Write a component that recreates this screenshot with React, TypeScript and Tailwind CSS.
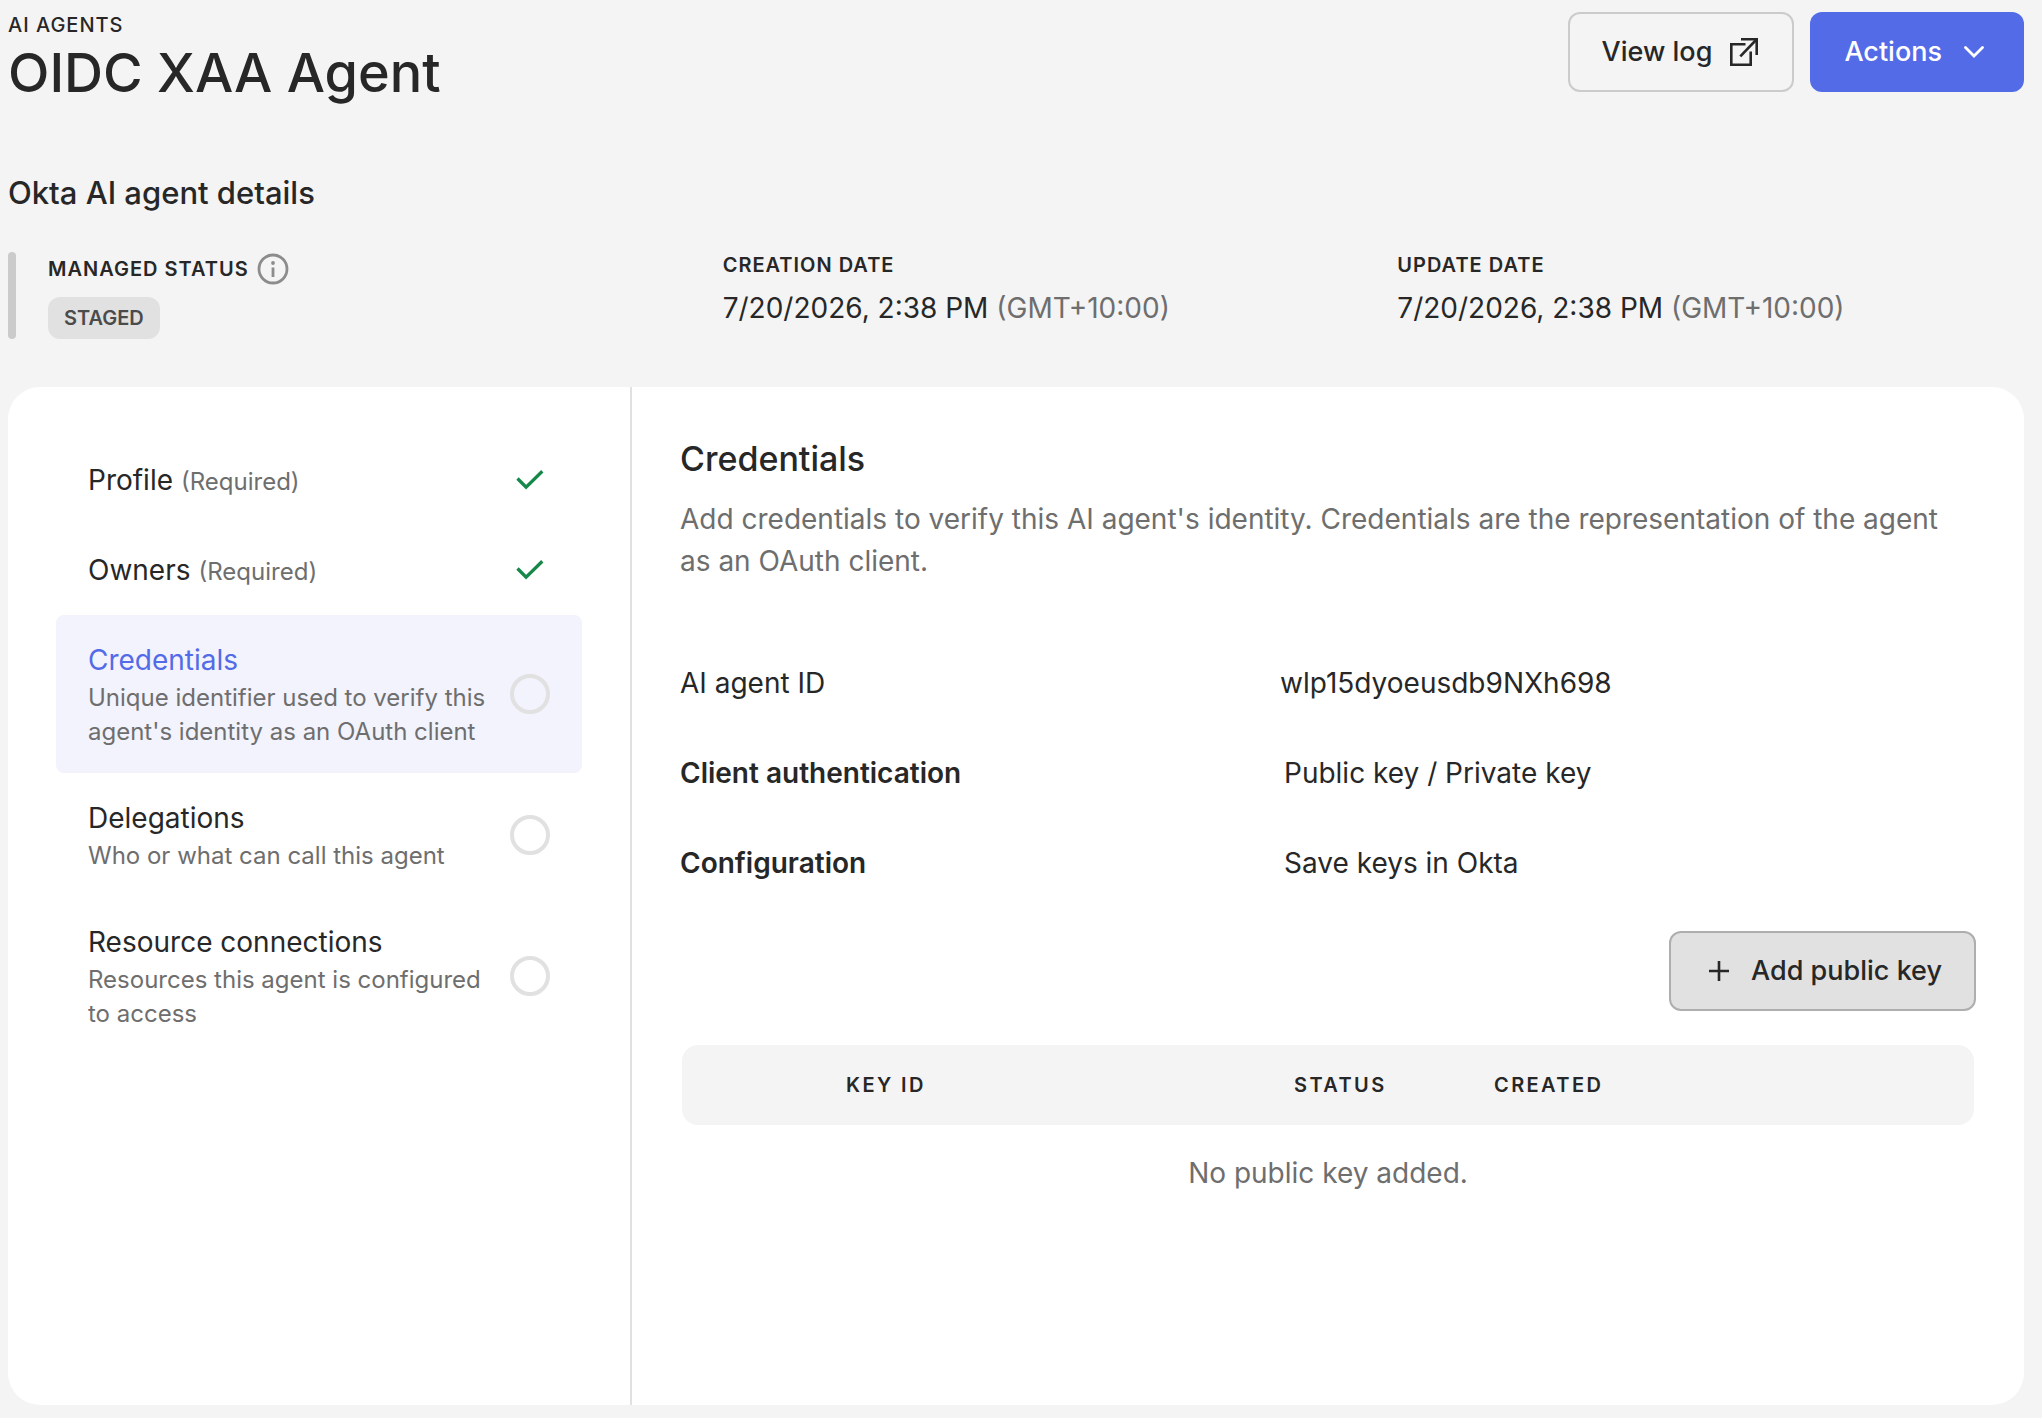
import React from 'react';

type Step = {
  name: string;
  note?: string;
  description?: string;
  done?: boolean;
  active?: boolean;
};

const STEPS: Step[] = [
  { name: 'Profile', note: '(Required)', done: true },
  { name: 'Owners', note: '(Required)', done: true },
  {
    name: 'Credentials',
    description: "Unique identifier used to verify this agent's identity as an OAuth client",
    active: true,
  },
  { name: 'Delegations', description: 'Who or what can call this agent' },
  { name: 'Resource connections', description: 'Resources this agent is configured to access' },
];

const DATES = [
  { label: 'Creation date', value: '7/20/2026, 2:38 PM', zone: '(GMT+10:00)' },
  { label: 'Update date', value: '7/20/2026, 2:38 PM', zone: '(GMT+10:00)' },
];

const ExternalIcon = () => (
  <svg width="28" height="28" viewBox="0 0 28 28" fill="none" stroke="currentColor" strokeWidth="2.6" aria-hidden="true">
    <path d="M15.5 6.3H1.3v20.4h19.4V13.5" />
    <path d="M11 1.3h15.7V17" />
    <path d="M10.3 18.3 26.5 1.5" />
  </svg>
);

const ChevronIcon = () => (
  <svg
    width="20"
    height="12"
    viewBox="0 0 20 12"
    fill="none"
    stroke="currentColor"
    strokeWidth="2.8"
    strokeLinecap="round"
    aria-hidden="true"
  >
    <path d="m1.5 1.5 8.5 8.5 8.5-8.5" />
  </svg>
);

const PlusIcon = () => (
  <svg width="20" height="20" viewBox="0 0 20 20" fill="none" stroke="currentColor" strokeWidth="2.6" aria-hidden="true">
    <path d="M10 0v20M0 10h20" />
  </svg>
);

const InfoIcon = () => (
  <svg width="32" height="32" viewBox="0 0 32 32" fill="none" aria-hidden="true">
    <circle cx="16" cy="16" r="14" stroke="#8c8c8c" strokeWidth="2.8" />
    <circle cx="16" cy="10" r="1.9" fill="#8c8c8c" />
    <path d="M16 14.5V24" stroke="#8c8c8c" strokeWidth="2.8" />
  </svg>
);

const CheckIcon = () => (
  <svg width="28" height="20" viewBox="0 0 28 20" fill="none" stroke="#16884a" strokeWidth="3.3" aria-hidden="true">
    <path d="m1.5 8.5 8.6 8.6L26.3 1.3" />
  </svg>
);

const Header = () => {
  return (
    <header className="flex items-start justify-between">
      <div>
        <p className="text-[20px] leading-[26px] font-medium tracking-wider uppercase">AI Agents</p>
        <h1 className="text-[54px] leading-[70px] font-medium">OIDC XAA Agent</h1>
      </div>
      <div className="flex gap-4 text-[27px] font-medium">
        <button type="button" className="flex h-20 items-center gap-[18px] rounded-xl border-2 border-[#cbcbcb] pr-[34px] pl-8">
          View log
          <ExternalIcon />
        </button>
        <button type="button" className="flex h-20 items-center gap-[22px] rounded-xl bg-[#546be7] pr-10 pl-[34px] text-white">
          Actions
          <ChevronIcon />
        </button>
      </div>
    </header>
  );
};

const Details = () => {
  return (
    <section className="mt-[62px]">
      <h2 className="text-[31px] leading-[46px] font-medium">Okta AI agent details</h2>
      <div className="mt-9 flex gap-8">
        <div className="w-2 rounded-full bg-[#cbcbcb]" />
        <dl className="grid flex-1 grid-cols-3 gap-12">
          <div>
            <dt className="flex h-[34px] items-center gap-2 text-[20px] font-semibold tracking-wider uppercase">
              Managed status
              <button type="button" aria-label="About managed status">
                <InfoIcon />
              </button>
            </dt>
            <dd className="mt-[11px] flex">
              <span className="rounded-xl bg-[#e1e1e1] px-4 text-[20px] leading-[42px] font-semibold text-[#4b4b4b]">
                STAGED
              </span>
            </dd>
          </div>
          {DATES.map((date) => (
            <div key={date.label}>
              <dt className="text-[20px] leading-[26px] font-semibold tracking-wider uppercase">{date.label}</dt>
              <dd className="mt-[9px] text-[28px] leading-[42px]">
                {date.value} <span className="text-[#6e6e6e]">{date.zone}</span>
              </dd>
            </div>
          ))}
        </dl>
      </div>
    </section>
  );
};

const StepNav = () => {
  return (
    <nav className="w-[624px] shrink-0 border-r-2 border-[#e1e1e1] p-12">
      {STEPS.map((step) => (
        <a
          href="#"
          key={step.name}
          className={`flex items-center justify-between gap-5 rounded-lg px-8 py-6 ${step.active ? 'bg-[#f2f3fd]' : ''}`}
        >
          <span className="flex-1">
            <span className={`block text-[28px] leading-[42px] ${step.active ? 'text-[#546be7]' : ''}`}>
              {step.name}
              {step.note && <span className="ml-2 text-[24px] leading-none text-[#6e6e6e]">{step.note}</span>}
            </span>
            {step.description && (
              <span className="block text-[24px] leading-[34px] text-[#6e6e6e]">{step.description}</span>
            )}
          </span>
          {step.done ? (
            <span className="flex w-10 justify-center">
              <CheckIcon />
            </span>
          ) : (
            <span className="size-10 rounded-full border-4 border-[#e1e1e1]" />
          )}
        </a>
      ))}
    </nav>
  );
};

const Credentials = () => {
  return (
    <section className="min-w-0 flex-1 p-12">
      <h2 className="text-[34px] leading-[48px] font-medium">Credentials</h2>
      <p className="mt-[15px] text-[28px] leading-[42px] text-[#6e6e6e]">
        Add credentials to verify this AI agent's identity. Credentials are the representation of the agent as an OAuth
        client.
      </p>

      <dl className="mt-14 grid grid-cols-[600px_1fr] text-[28px] leading-[90px]">
        <dt>AI agent ID</dt>
        <dd>wlp15dyoeusdb9NXh698</dd>
        <dt className="font-semibold">Client authentication</dt>
        <dd className="pl-1">Public key / Private key</dd>
        <dt className="font-semibold">Configuration</dt>
        <dd className="pl-1">Save keys in Okta</dd>
      </dl>

      <div className="mt-[23px] flex justify-end">
        <button
          type="button"
          className="flex h-20 items-center gap-[22px] rounded-xl border-2 border-[#aeaeae] bg-[#e1e1e1] pr-8 pl-[38px] text-[27px] font-medium"
        >
          <PlusIcon />
          Add public key
        </button>
      </div>

      <div className="mt-[34px] px-[2px]">
        <table className="w-full table-fixed">
          <thead>
            <tr className="h-20 bg-[#f4f4f4] text-left text-[20px] tracking-[0.12em]">
              <th className="w-[132px] rounded-l-2xl" />
              <th className="w-[448px] px-8 font-semibold">KEY ID</th>
              <th className="w-[200px] px-8 font-semibold">STATUS</th>
              <th className="rounded-r-2xl px-8 font-semibold">CREATED</th>
            </tr>
          </thead>
          <tbody>
            <tr className="h-24">
              <td colSpan={4} className="text-center text-[28px] text-[#6e6e6e]">
                No public key added.
              </td>
            </tr>
          </tbody>
        </table>
      </div>
    </section>
  );
};

const App = () => {
  return (
    <div className="flex min-h-screen flex-col bg-[#f4f4f4] pt-3 pr-[18px] pb-[13px] pl-2 font-['Inter',sans-serif] text-[#272727]">
      <Header />
      <Details />
      <main className="mt-12 flex flex-1 rounded-[32px] bg-white">
        <StepNav />
        <Credentials />
      </main>
    </div>
  );
};

export default App;
